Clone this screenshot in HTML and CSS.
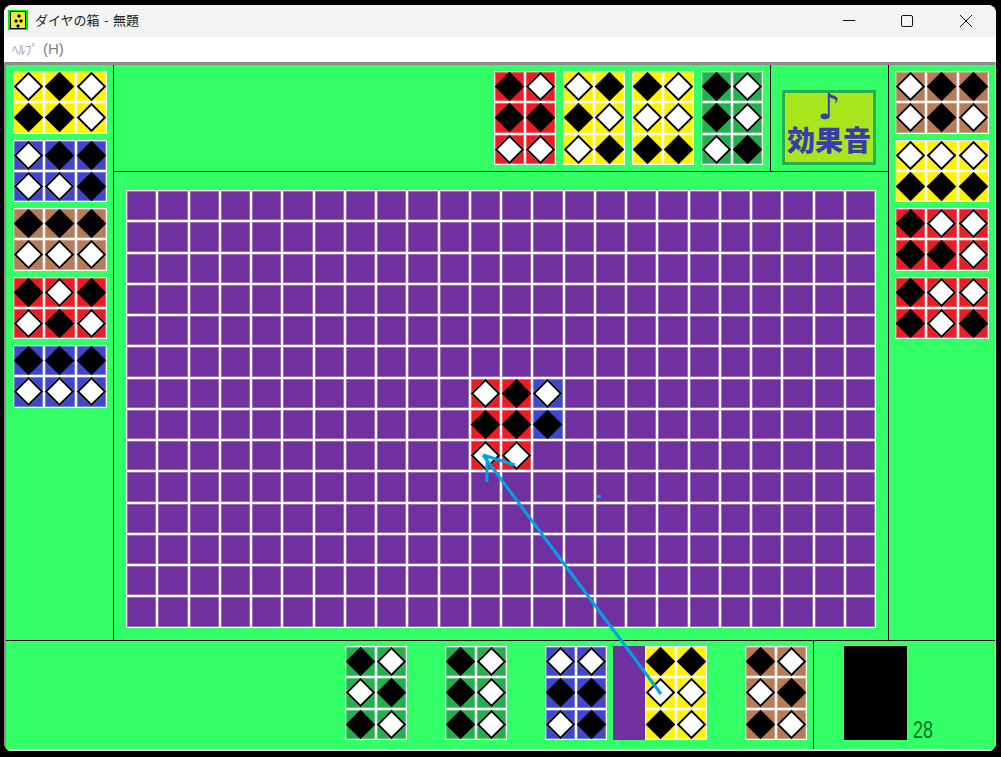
FILE: index.html
```html
<!DOCTYPE html>
<html lang="ja">
<head>
    <meta charset="UTF-8" />
    <title>ダイヤの箱 - 無題</title>
    <link rel="stylesheet" href="styles.css">
</head>

<body>
    <div class="window">
        <div class="titlebar">
            <svg class="app-icon" width="20" height="20" viewBox="0 0 20 20">
                <rect width="20" height="20" fill="#00f000" />
                <rect x="2" y="1" width="16" height="18" fill="#000" />
                <rect x="3" y="2" width="14" height="16" fill="#f2e83a" />
                <path d="M11 4l2 2-2 2-2-2zM8 9l2 2-2 2-2-2zM13 9l2 2-2 2-2-2zM10 14l2 2-2 2-2-2z" fill="#000" />
            </svg>
            <span class="title">ダイヤの箱 - 無題</span>
            <div class="controls">
                <svg width="58" height="32" viewBox="0 0 58 32"><path d="M22 15.500h12" stroke="#111" fill="none" /></svg>
                <svg width="58" height="32" viewBox="0 0 58 32"><rect x="22.500" y="10.500" width="11" height="11" rx="1.500" stroke="#111" fill="none" /></svg>
                <svg width="58" height="32" viewBox="0 0 58 32"><path d="M23 10l12 12M35 10L23 22" stroke="#111" fill="none" /></svg>
            </div>
        </div>
        <div class="menubar"><span class="menu-kana">ﾍﾙﾌﾟ</span><span class="menu-key">(H)</span></div>

        <div class="game">
            <div class="side left" id="leftSide"></div>
            <div class="center">
                <div class="top">
                    <div class="top-pieces" id="topPieces"></div>
                    <div class="sound-cell">
                        <div class="sound-btn">
                            <span class="note">♪</span>
                            <span class="sound-label">効果音</span>
                        </div>
                    </div>
                </div>
                <div class="board-wrap">
                    <div class="board" id="board"></div>
                </div>
            </div>
            <div class="side right" id="rightSide"></div>
            <div class="bottom">
                <div class="hand" id="hand"></div>
                <div class="next">
                    <div class="next-box"></div>
                    <span class="count">28</span>
                </div>
            </div>
        </div>

        <!-- pen marks drawn over the screenshot -->
        <svg class="marks" width="1001" height="757" viewBox="0 0 1001 757">
            <path d="M661 694L483 455M487 482V457M515 465L483 455" />
            <path d="M597 496.500h4" />
        </svg>
    </div>

    <script src="game.js"></script>
</body>
</html>
```

FILE: styles.css
```css
html, body {
    margin: 0;
    height: 100%;
    background: #000;
    overflow: hidden;
}

.window {
    position: relative;
    box-sizing: border-box;
    width: 992px;
    height: 746px;
    margin: 5px 0 0 4px;
    border-radius: 8px;
    overflow: hidden;
    background: #fff;
    display: flex;
    flex-direction: column;
    font-family: "Noto Sans CJK JP", "Noto Sans", sans-serif;
}

.titlebar {
    height: 32px;
    background: #f3f3f3;
    display: flex;
    align-items: center;
    flex: none;
}

.app-icon {
    margin: 0 7px 2px 4px;
}

.title {
    font-size: 13px;
    color: #222;
    word-spacing: 1.5px;
    margin-bottom: 3px;
}

.controls {
    margin-left: auto;
    margin-right: 1px;
    display: flex;
    height: 32px;
}

.menubar {
    height: 25px;
    flex: none;
    background: #fff;
    box-sizing: border-box;
    padding-left: 8px;
    line-height: 21px;
    color: #808080;
}

.menu-kana {
    font-size: 13px;
    color: #a0a0a0;
}

.menu-key {
    font-family: "Liberation Sans", sans-serif;
    font-size: 15px;
    margin-left: 5px;
}

.game {
    flex: 1;
    display: grid;
    grid-template-columns: 107px 776px 1fr;
    grid-template-rows: 575px 1fr;
    background: #33ff66;
    border-top: 3px solid #8c8c8c;
    border-left: 2px solid #8c8c8c;
    border-bottom: 2px solid #e8e8e8;
    border-right: 1px solid #c8c8c8;
}

.side {
    display: flex;
    flex-direction: column;
    gap: 6px;
    padding-top: 6px;
    box-sizing: border-box;
}

.side.left {
    padding-left: 7px;
}

.side.right {
    padding-left: 6px;
}

.center {
    display: flex;
    flex-direction: column;
    border-left: 1px solid #000;
    border-right: 1px solid #000;
}

.top {
    height: 106px;
    flex: none;
    display: flex;
    border-bottom: 1px solid #000;
    box-sizing: content-box;
}

.top-pieces {
    flex: 1;
    display: flex;
    justify-content: flex-end;
    gap: 6.5px;
    padding: 6px 7px 0 0;
    box-sizing: border-box;
}

.sound-cell {
    width: 118px;
    box-sizing: border-box;
    border-left: 1px solid #000;
    padding: 25px 0 0 11px;
}

.sound-btn {
    width: 94px;
    height: 75px;
    box-sizing: border-box;
    background: #a8e61d;
    border: 3px solid #22b14c;
    display: flex;
    flex-direction: column;
    align-items: center;
    color: #3a3cab;
    font-weight: 900;
}

.note {
    font-family: "DejaVu Sans", sans-serif;
    font-size: 36px;
    line-height: 28px;
    font-weight: 400;
}

.sound-label {
    font-size: 28px;
    line-height: 36px;
    white-space: nowrap;
}

.board-wrap {
    flex: 1;
    padding: 18px 0 0 12px;
}

.board {
    display: grid;
    grid-template-columns: repeat(24, 31.25px);
    grid-auto-rows: 31.25px;
    width: 750px;
}

.piece {
    display: grid;
    flex: none;
    width: max-content;
}

.piece.wide {
    grid-template-columns: repeat(3, 31.25px);
    grid-auto-rows: 31.25px;
}

.piece.tall {
    grid-template-columns: repeat(2, 31.25px);
    grid-auto-rows: 31.25px;
}

.cell {
    box-sizing: border-box;
    border: 1px solid #fff;
    box-shadow: inset 0 0 0 1px rgba(255, 255, 255, 0.3);
    display: flex;
    align-items: center;
    justify-content: center;
}

.purple { background: #7030a0; }
.yellow { background: #fff200; }
.blue { background: #3f48cc; }
.brown { background: #b97a57; }
.red { background: #ed1c24; }
.green { background: #22b14c; }

.dia {
    width: 21px;
    height: 21px;
    flex: none;
    box-sizing: border-box;
    transform: rotate(45deg);
    background: #000;
}

.dia.w {
    background: #fff;
    border: 2px solid #000;
}

.bottom {
    grid-column: 1 / -1;
    display: flex;
    border-top: 1px solid #000;
}

.hand {
    width: 807px;
    flex: none;
    box-sizing: border-box;
    display: flex;
    padding: 5px 0 0 338.5px;
}

.piece.gap-l {
    margin-left: 37.5px;
}

.strip {
    width: 32px;
    height: 94px;
    margin-left: 5.5px;
    background: #7030a0;
    flex: none;
}

.next {
    flex: 1;
    border-left: 1px solid #000;
    display: flex;
    align-items: flex-start;
    padding: 5px 0 0 30px;
}

.next-box {
    width: 63px;
    height: 94px;
    background: #000;
}

.count {
    font-family: "Liberation Sans", sans-serif;
    font-size: 23px;
    line-height: 19px;
    color: #0a6e30;
    margin: 75px 0 0 6px;
    display: inline-block;
    transform: scaleX(0.78);
    transform-origin: left bottom;
}

.marks {
    position: absolute;
    left: -4px;
    top: -5px;
    pointer-events: none;
}

.marks path {
    fill: none;
    stroke: #00a2e8;
    stroke-width: 3;
}
```

FILE: game.js
```js
// w = white diamond, b = black diamond, row by row
const leftPieces = [
    ["yellow", "wbw bbw"],
    ["blue", "wbb wwb"],
    ["brown", "bbb www"],
    ["red", "bwb wbw"],
    ["blue", "bbb www"]
];
const rightPieces = [
    ["brown", "wbb wbw"],
    ["yellow", "www bbb"],
    ["red", "bww bbw"],
    ["red", "bww bwb"]
];
const topPieces = [
    ["red", "bw bb ww"],
    ["yellow", "wb bw wb"],
    ["yellow", "bw ww bb"],
    ["green", "bw bw wb"]
];
const handPieces = [
    ["green", "bw wb bw"],
    ["green", "bw bw bw"],
    ["blue", "ww bb wb"],
    ["yellow", "bb ww bw"],
    ["brown", "bw wb bw"]
];

// cells already placed on the board: row, col, colour, diamond
const placed = [
    [6, 11, "red", "w"], [6, 12, "red", "b"], [6, 13, "blue", "w"],
    [7, 11, "red", "b"], [7, 12, "red", "b"], [7, 13, "blue", "b"],
    [8, 11, "red", "w"], [8, 12, "red", "w"]
];

function makeCell(color, kind) {
    const cell = document.createElement("div");
    cell.className = "cell " + color;
    if (kind) {
        const dia = document.createElement("div");
        dia.className = kind === "w" ? "dia w" : "dia";
        cell.appendChild(dia);
    }
    return cell;
}

function makePiece(color, pattern) {
    const rows = pattern.split(" ");
    const piece = document.createElement("div");
    piece.className = "piece " + (rows[0].length === 3 ? "wide" : "tall");
    rows.join("").split("").forEach(kind => piece.appendChild(makeCell(color, kind)));
    return piece;
}

function fill(id, list) {
    const box = document.getElementById(id);
    list.forEach(([color, pattern]) => box.appendChild(makePiece(color, pattern)));
}

fill("leftSide", leftPieces);
fill("rightSide", rightPieces);
fill("topPieces", topPieces);
fill("hand", handPieces);

// spacing in the hand row, with the purple strip before the yellow piece
const hand = document.getElementById("hand");
hand.children[1].classList.add("gap-l");
hand.children[2].classList.add("gap-l");
hand.children[4].classList.add("gap-l");
const strip = document.createElement("div");
strip.className = "strip";
hand.insertBefore(strip, hand.children[3]);

const board = document.getElementById("board");
for (let r = 0; r < 14; r++) {
    for (let c = 0; c < 24; c++) {
        const hit = placed.find(p => p[0] === r && p[1] === c);
        board.appendChild(hit ? makeCell(hit[2], hit[3]) : makeCell("purple"));
    }
}
```
